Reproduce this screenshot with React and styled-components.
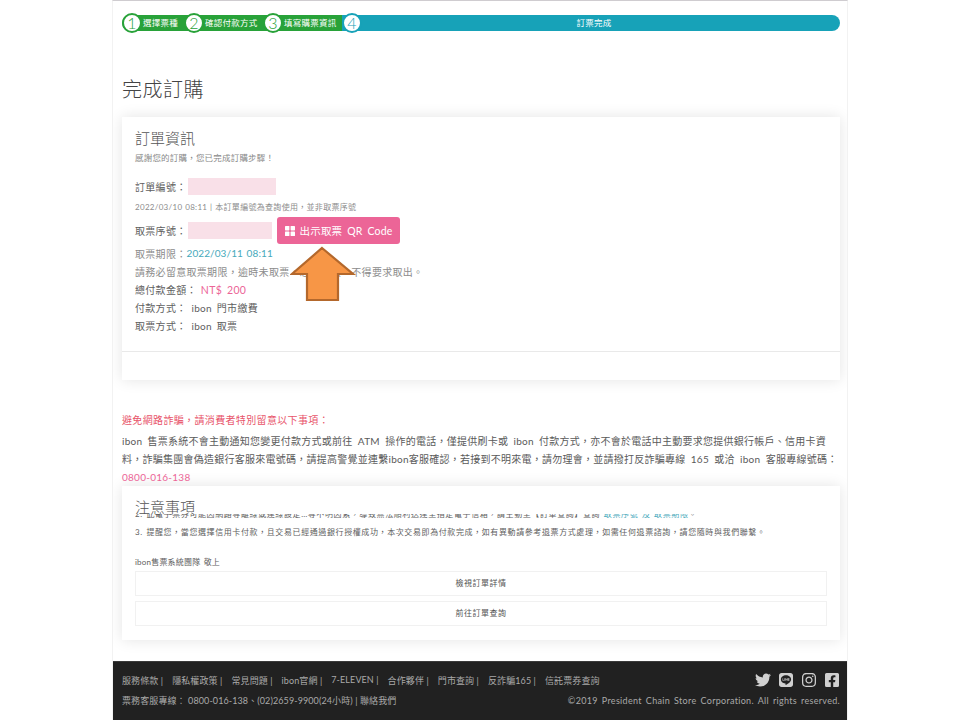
import React from 'react';
import styled, { createGlobalStyle } from 'styled-components';
import { FaTwitter, FaLine, FaInstagram, FaFacebookSquare } from 'react-icons/fa';

const GlobalStyle = createGlobalStyle`
  html, body {
    margin: 0;
    padding: 0;
    background: #fff;
  }
  body {
    font-family: Lato, "Noto Sans CJK TC", sans-serif;
    color: #555;
  }
`;

const Page = styled.div`
  width: 736px;
  height: 720px;
  margin: 0 auto;
  box-sizing: border-box;
  border-top: 1px solid #cfccd0;
  border-left: 1px solid #f2f2f2;
  border-right: 1px solid #f2f2f2;
  display: flex;
  flex-direction: column;
  position: relative;
  overflow: hidden;
`;

const Main = styled.main`
  flex: 1;
  padding: 14px 7px 0 9px;
`;

const StepBar = styled.div`
  display: flex;
  height: 16px;
  align-items: center;
`;

const Step = styled.div`
  display: flex;
  align-items: center;
  height: 16px;
  width: ${({ $width }) => ($width ? `${$width}px` : 'auto')};
  flex: ${({ $grow }) => ($grow ? 1 : 'none')};
  background: ${({ $color }) => $color};
  color: #fff;
  border-radius: ${({ $round }) => ($round === 'left' ? '8px 0 0 8px' : $round === 'right' ? '0 8px 8px 0' : '0')};
`;

const Circle = styled.span`
  width: 20px;
  height: 20px;
  box-sizing: border-box;
  flex: none;
  border-radius: 50%;
  background: #fff;
  border: 2px solid ${({ $color }) => $color};
  color: ${({ $color }) => $color};
  font-size: 16px;
  font-weight: 300;
  line-height: 16px;
  text-align: center;
`;

const StepLabel = styled.span`
  font-size: 8.5px;
  line-height: 16px;
  letter-spacing: 0.25px;
  margin-left: 1px;
  white-space: nowrap;
`;

const FinalLabel = styled(StepLabel)`
  flex: 1;
  text-align: center;
  margin: 0;
  padding-right: 14px;
`;

const PageTitle = styled.h1`
  margin: 44px 0 14px;
  font-size: 20px;
  line-height: 28px;
  font-weight: 300;
  letter-spacing: 0.5px;
  color: #444;
`;

const Card = styled.section`
  background: #fff;
  box-shadow: 0 0 14px rgba(0, 0, 0, 0.11);
`;

const CardBody = styled.div`
  padding: 11px 13px 0;
  height: 234px;
  box-sizing: border-box;
`;

const CardFooter = styled.div`
  height: 28px;
  border-top: 1px solid #e9e9e9;
`;

const CardTitle = styled.h2`
  margin: 0;
  font-size: 15px;
  line-height: 20px;
  font-weight: 300;
  color: #555;
`;

const Thanks = styled.p`
  margin: 2px 0 0;
  font-size: 8.5px;
  line-height: 16px;
  letter-spacing: 0.2px;
  color: #888;
`;

const Row = styled.div`
  display: flex;
  align-items: center;
  font-size: 10px;
  height: ${({ $h }) => $h || 18}px;
  margin-top: ${({ $mt }) => $mt || 0}px;
  letter-spacing: 0.3px;
  color: ${({ $muted }) => ($muted ? '#8c8c8c' : '#606060')};
  white-space: nowrap;
`;

const SmallRow = styled(Row)`
  font-size: 8px;
  color: #8c8c8c;
  word-spacing: 0.5px;
`;

const Masked = styled.span`
  display: block;
  width: ${({ $w }) => $w}px;
  height: 17px;
  margin-left: 1px;
  background: #f9e0e8;
`;

const QrButton = styled.button`
  display: flex;
  align-items: center;
  gap: 5px;
  height: 27px;
  width: 123px;
  margin-left: 5px;
  padding: 0 0 0 8px;
  border: 0;
  border-radius: 3px;
  background: #ec6597;
  color: #fff;
  font-family: inherit;
  font-size: 10.5px;
  letter-spacing: 0.2px;
  word-spacing: 2px;
  white-space: nowrap;
`;

const Teal = styled.span`
  color: #47a9bb;
  font-size: 10px;
  letter-spacing: 0.1px;
  word-spacing: 1px;
`;

const Pink = styled.span`
  color: #ec6597;
  font-size: 10.5px;
  margin-left: 4px;
  word-spacing: 2px;
`;

const Value = styled.span`
  margin-left: 5px;
  word-spacing: 2px;
  font-size: 10px;
`;

const Arrow = styled.svg`
  position: absolute;
  left: 177px;
  top: 245px;
`;

const Notice = styled.div`
  margin-top: 32px;
  height: 74px;
`;

const NoticeTitle = styled.div`
  font-size: 10px;
  line-height: 16px;
  letter-spacing: 0.35px;
  color: #e8546a;
`;

const NoticeText = styled.p`
  margin: 4px 0 0;
  font-size: 10px;
  line-height: 18px;
  word-spacing: 2.5px;
  letter-spacing: 0.25px;
  color: #5a5a5a;
  white-space: nowrap;
`;

const Phone = styled.span`
  color: #ec6597;
`;

const NotesCard = styled(Card)`
  padding: 12px 13px 14px;
  height: 154px;
  box-sizing: border-box;
`;

const NotesTitle = styled(CardTitle)`
  position: relative;
  z-index: 1;
  height: 16px;
  line-height: 18px;
`;

const ClippedLine = styled.div`
  height: 4px;
  overflow: hidden;
`;

const NoteLine = styled.p`
  margin: ${({ $offset }) => $offset || 0}px 0 0;
  font-size: 8px;
  line-height: 14px;
  letter-spacing: 0.6px;
  word-spacing: 1px;
  color: #606060;
  white-space: nowrap;
`;

const NoteLink = styled.span`
  color: #47a9bb;
`;

const Signature = styled.div`
  margin-top: 16px;
  font-size: 8px;
  line-height: 14px;
  letter-spacing: 0.2px;
  word-spacing: 1px;
  color: #606060;
`;

const LinkButton = styled.div`
  height: 25px;
  margin-top: ${({ $mt }) => $mt || 0}px;
  border: 1px solid #f1f1f1;
  box-sizing: border-box;
  font-size: 8px;
  line-height: 23px;
  letter-spacing: 0.5px;
  text-align: center;
  color: #555;
`;

const Footer = styled.footer`
  height: 59px;
  flex: none;
  box-sizing: border-box;
  padding: 8px 7px 0 9px;
  background: #212121;
  border-top: 1px solid #3a3a3a;
  color: #a9a9a9;
  font-size: 9px;
  display: flex;
  flex-direction: column;
`;

const FooterRow = styled.div`
  display: flex;
  align-items: center;
  justify-content: space-between;
  height: ${({ $h }) => $h}px;
`;

const FooterLinks = styled.div`
  display: flex;
  gap: 9px;
  white-space: nowrap;
  letter-spacing: 0.1px;
`;

const Icons = styled.div`
  display: flex;
  gap: 7px;
  color: #d0d0d0;
  font-size: 16px;
  line-height: 0;
`;

const Contact = styled.span`
  letter-spacing: 0.1px;
`;

const Copyright = styled.span`
  word-spacing: 1.5px;
  letter-spacing: 0.3px;
`;

const steps = [
  { n: 1, label: '選擇票種', width: 62, round: 'left' },
  { n: 2, label: '確認付款方式', width: 79 },
  { n: 3, label: '填寫購票資訊', width: 79 },
];

const footerLinks = [
  '服務條款 |',
  '隱私權政策 |',
  '常見問題 |',
  'ibon官網 |',
  '7-ELEVEN |',
  '合作夥伴 |',
  '門市查詢 |',
  '反詐騙165 |',
  '信託票券查詢',
];

const QrIcon = () => (
  <svg width="10" height="10" viewBox="0 0 10 10" fill="#fff">
    <rect x="0" y="0" width="4.4" height="4.4" rx="0.6" />
    <rect x="5.6" y="0" width="4.4" height="4.4" rx="0.6" />
    <rect x="0" y="5.6" width="4.4" height="4.4" rx="0.6" />
    <rect x="5.6" y="5.6" width="4.4" height="4.4" rx="0.6" />
  </svg>
);

const App = () => {
  return (
    <Page lang="zh-TW">
      <GlobalStyle />
      <Main>
        <StepBar>
          {steps.map((s) => (
            <Step key={s.n} $width={s.width} $color="#28a239" $round={s.round}>
              <Circle $color="#28a239">{s.n}</Circle>
              <StepLabel>{s.label}</StepLabel>
            </Step>
          ))}
          <Step $grow $color="#17a2b8" $round="right">
            <Circle $color="#17a2b8">4</Circle>
            <FinalLabel>訂票完成</FinalLabel>
          </Step>
        </StepBar>

        <PageTitle>完成訂購</PageTitle>

        <Card>
          <CardBody>
            <CardTitle>訂單資訊</CardTitle>
            <Thanks>感謝您的訂購，您已完成訂購步驟！</Thanks>
            <Row $mt={11}>
              訂單編號：<Masked $w={88} />
            </Row>
            <SmallRow $mt={3} $h={16}>2022/03/10 08:11 | 本訂單編號為查詢使用，並非取票序號</SmallRow>
            <Row $h={27} $mt={3}>
              取票序號：<Masked $w={84} />
              <QrButton>
                <QrIcon />
                出示取票 QR Code
              </QrButton>
            </Row>
            <Row $muted>
              取票期限：<Teal>2022/03/11 08:11</Teal>
            </Row>
            <Row $muted>請務必留意取票期限，逾時未取票，恕不退款，不得要求取出。</Row>
            <Row $mt={1} $h={17}>
              總付款金額：<Pink>NT$ 200</Pink>
            </Row>
            <Row>
              付款方式：<Value>ibon 門市繳費</Value>
            </Row>
            <Row>
              取票方式：<Value>ibon 取票</Value>
            </Row>
          </CardBody>
          <CardFooter />
        </Card>

        <Notice>
          <NoticeTitle>避免網路詐騙，請消費者特別留意以下事項：</NoticeTitle>
          <NoticeText>
            ibon 售票系統不會主動通知您變更付款方式或前往 ATM 操作的電話，僅提供刷卡或 ibon 付款方式，亦不會於電話中主動要求您提供銀行帳戶、信用卡資
            <br />
            料，詐騙集團會偽造銀行客服來電號碼，請提高警覺並連繫ibon客服確認，若接到不明來電，請勿理會，並請撥打反詐騙專線 165 或洽 ibon 客服專線號碼：
            <br />
            <Phone>0800-016-138</Phone>
          </NoticeText>
        </Notice>

        <NotesCard>
          <NotesTitle>注意事項</NotesTitle>
          <ClippedLine>
            <NoteLine $offset={-7}>
              2. 此電子票券可能因網路等離線或連線設定…等不明因素，導致無法順利送達至指定電子信箱，請主動至【訂單查詢】查詢 <NoteLink>取票序號 及 取票期限</NoteLink>。
            </NoteLine>
          </ClippedLine>
          <NoteLine $offset={7}>
            3. 提醒您，當您選擇信用卡付款，且交易已經通過銀行授權成功，本次交易即為付款完成，如有異動請參考退票方式處理，如需任何退票諮詢，請您隨時與我們聯繫。
          </NoteLine>
          <Signature>ibon售票系統團隊 敬上</Signature>
          <LinkButton $mt={2}>檢視訂單詳情</LinkButton>
          <LinkButton $mt={5}>前往訂單查詢</LinkButton>
        </NotesCard>
      </Main>

      <Footer>
        <FooterRow $h={20}>
          <FooterLinks>
            {footerLinks.map((l) => (
              <span key={l}>{l}</span>
            ))}
          </FooterLinks>
          <Icons>
            <FaTwitter />
            <FaLine />
            <FaInstagram />
            <FaFacebookSquare />
          </Icons>
        </FooterRow>
        <FooterRow $h={20}>
          <Contact>票務客服專線： 0800-016-138、(02)2659-9900(24小時) | 聯絡我們</Contact>
          <Copyright>©2019 President Chain Store Corporation. All rights reserved.</Copyright>
        </FooterRow>
      </Footer>

      <Arrow width="70" height="58" viewBox="0 0 70 58">
        <path d="M32 2 L63 28 L48 28 L48 54 L17 54 L17 28 L2 28 Z" fill="#f79646" stroke="#b4682c" strokeWidth="2.2" />
      </Arrow>
    </Page>
  );
};

export default App;
